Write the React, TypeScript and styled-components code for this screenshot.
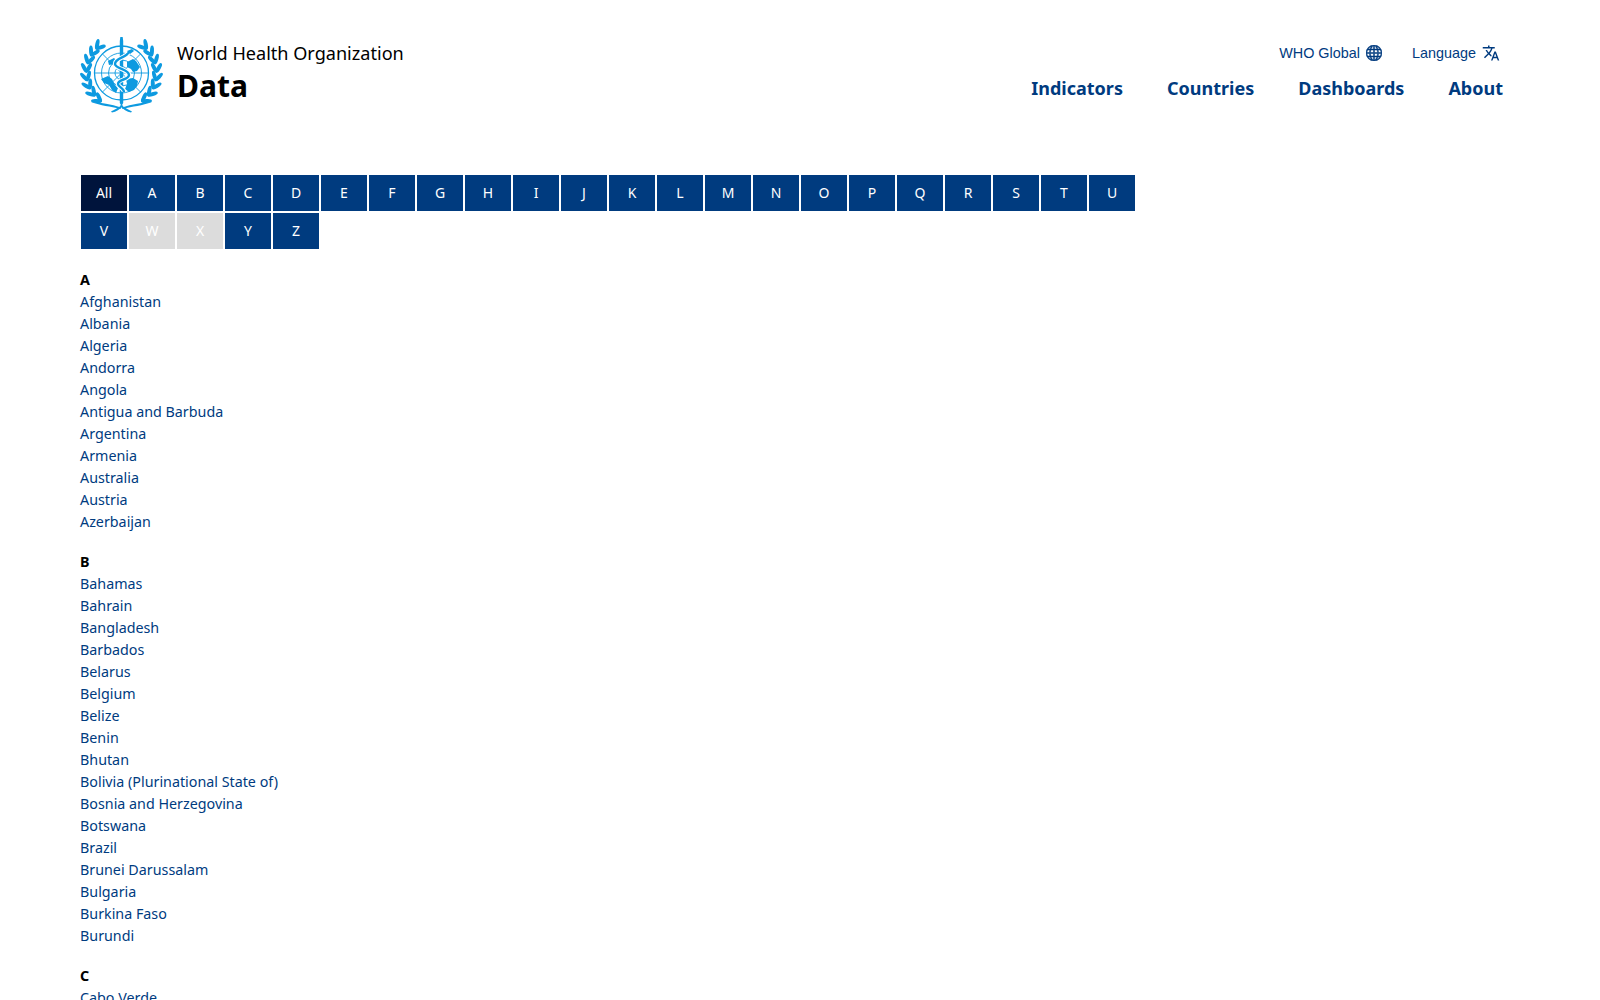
import styled, { createGlobalStyle } from "styled-components";
import { BsGlobe } from "react-icons/bs";
import { MdTranslate } from "react-icons/md";

const LETTERS = ["All", ..."ABCDEFGHIJKLMNOPQRSTUVWXYZ".split("")];
const DISABLED = ["W", "X"];

const SECTIONS: { letter: string; countries: string[] }[] = [
    {
        letter: "A",
        countries: ["Afghanistan", "Albania", "Algeria", "Andorra", "Angola", "Antigua and Barbuda", "Argentina", "Armenia", "Australia", "Austria", "Azerbaijan"],
    },
    {
        letter: "B",
        countries: ["Bahamas", "Bahrain", "Bangladesh", "Barbados", "Belarus", "Belgium", "Belize", "Benin", "Bhutan", "Bolivia (Plurinational State of)", "Bosnia and Herzegovina", "Botswana", "Brazil", "Brunei Darussalam", "Bulgaria", "Burkina Faso", "Burundi"],
    },
    {
        letter: "C",
        countries: ["Cabo Verde"],
    },
];

// wreath leaves, one pair every 14 degrees up the left branch
const WREATH_ANGLES = [36, 50, 64, 78, 92, 106, 120, 134];
const EMBLEM_BLUE = "#0d9ae0";

const Branch = () => (
    <g fill={EMBLEM_BLUE} stroke="none">
        {WREATH_ANGLES.map((deg) => {
            const t = (deg * Math.PI) / 180;
            const x = 41.5 - 35 * Math.sin(t);
            const y = 36 + 35 * Math.cos(t);
            return [-32, 28].map((splay) => {
                const phi = deg - 90 + splay;
                const p = (phi * Math.PI) / 180;
                const lx = x + 4.5 * Math.sin(p);
                const ly = y - 4.5 * Math.cos(p);
                return <ellipse key={splay} cx={lx} cy={ly} rx="2" ry="5.4" transform={`rotate(${phi} ${lx} ${ly})`} />;
            });
        })}
        <path d="M11 65c10 .5 20 2 30 5.500l-.5 1.500C30 69 21 69 11 65z" />
        <path d="M31 74.500c3-1.500 7-3.500 11-6.500l1 1c-3 3-7 6-11 6.500z" />
    </g>
);

const Emblem = () => (
    <svg width="84" height="76" viewBox="0 0 84 76" fill="none" stroke={EMBLEM_BLUE}>
        <circle cx="41.5" cy="36" r="27" strokeWidth="1.3" />
        <circle cx="41.5" cy="36" r="20" strokeWidth=".9" />
        <circle cx="41.5" cy="36" r="13" strokeWidth=".9" />
        <circle cx="41.5" cy="36" r="6.5" strokeWidth=".9" />
        <path d="M14.5 36H68.5M22.5 17l38 38M60.5 17l-38 38" strokeWidth=".9" />
        <g fill={EMBLEM_BLUE} stroke="none">
            <path d="M21 42l7-3 4 3 3 6 3 3-2 5-4-3-3-5-5-2z" />
            <path d="M47 25l6-3 3 2 4 6-3 4-4 1-2-3-4-2z" />
            <path d="M46 42l7-1 5 3-1 5-3 4-5 2-4-3 2-5z" />
            <path d="M28 24l6-3 3 3-3 3-5 1z" />
            <path d="M40.3 0h2.400l.5 4V66l-1.700 3-1.700-3V4z" />
        </g>
        <path d="M49 15c-3 6-14 6-14 12 0 5 14 5 14 11 0 5-11 4-11 9 0 3 6 4 6 8" stroke="#fff" strokeWidth="4.4" />
        <path d="M49 15c-3 6-14 6-14 12 0 5 14 5 14 11 0 5-11 4-11 9 0 3 6 4 6 8" strokeWidth="2.4" />
        <path d="M47 14l5-2 2 2-4 3z" fill={EMBLEM_BLUE} stroke="none" />
        <Branch />
        <g transform="translate(83 0) scale(-1 1)">
            <Branch />
        </g>
    </svg>
);

const App = () => (
    <Page>
        <GlobalStyle />
        <Header>
            <Brand>
                <Emblem />
                <BrandText>
                    <Organization>World Health Organization</Organization>
                    <BrandTitle>Data</BrandTitle>
                </BrandText>
            </Brand>
            <HeaderRight>
                <Utility>
                    <UtilityLink>
                        WHO Global <GlobeIcon size={16} />
                    </UtilityLink>
                    <UtilityLink>
                        Language <MdTranslate size={18} />
                    </UtilityLink>
                </Utility>
                <MainNav>
                    <NavLink>Indicators</NavLink>
                    <NavLink>Countries</NavLink>
                    <NavLink>Dashboards</NavLink>
                    <NavLink>About</NavLink>
                </MainNav>
            </HeaderRight>
        </Header>
        <Filter>
            {LETTERS.map((letter) => (
                <LetterButton key={letter} $active={letter === "All"} $disabled={DISABLED.includes(letter)}>
                    {letter}
                </LetterButton>
            ))}
        </Filter>
        {SECTIONS.map((section) => (
            <Section key={section.letter}>
                <SectionLetter>{section.letter}</SectionLetter>
                {section.countries.map((country) => (
                    <CountryLink key={country}>{country}</CountryLink>
                ))}
            </Section>
        ))}
    </Page>
);

export default App;

const GlobalStyle = createGlobalStyle`
    html, body {
        margin: 0;
        height: 1000px;
        overflow: hidden;
        background: #fff;
    }
    body {
        font-family: "Noto Sans", sans-serif;
    }
`;
const Page = styled.div`
    height: 1000px;
    overflow: hidden;
    padding: 0 97px 0 80px;
`;
const Header = styled.header`
    display: flex;
    justify-content: space-between;
    align-items: flex-start;
    padding-top: 37px;
    height: 175px;
    box-sizing: border-box;
`;
const Brand = styled.div`
    display: flex;
    align-items: flex-start;
    gap: 13px;
`;
const BrandText = styled.div`
    display: flex;
    flex-direction: column;
    padding-top: 3px;
`;
const Organization = styled.div`
    font-size: 18.1px;
    line-height: 26px;
    color: #000;
`;
const BrandTitle = styled.div`
    font-size: 30px;
    font-weight: 700;
    line-height: 40px;
    color: #000;
`;
const HeaderRight = styled.div`
    display: flex;
    flex-direction: column;
    align-items: flex-end;
`;
const Utility = styled.div`
    display: flex;
    align-items: center;
    gap: 30px;
    height: 24px;
    padding: 4px 3px 0 0;
`;
const UtilityLink = styled.a`
    display: flex;
    align-items: center;
    gap: 6px;
    font-family: "Liberation Sans", Arial, sans-serif;
    font-size: 14.4px;
    line-height: 18px;
    color: #003b7f;
    svg {
        flex: none;
    }
`;
const GlobeIcon = styled(BsGlobe)`
    stroke: currentColor;
    stroke-width: 0.5px;
`;
const MainNav = styled.nav`
    display: flex;
    gap: 44px;
    margin-top: 10px;
`;
const NavLink = styled.a`
    font-size: 18px;
    font-weight: 700;
    line-height: 26px;
    color: #003b7f;
`;
const Filter = styled.div`
    display: flex;
    flex-wrap: wrap;
    gap: 2px;
    width: 1080px;
    margin: 0 0 20px 1px;
`;
const LetterButton = styled.button<{ $active?: boolean; $disabled?: boolean }>`
    width: 46px;
    height: 36px;
    padding: 0 0 2px;
    border: 0;
    font-family: "Noto Sans", sans-serif;
    font-size: 14px;
    color: #fff;
    background: ${(p) => (p.$active ? "#00143c" : p.$disabled ? "#dcdcdc" : "#003b7f")};
`;
const Section = styled.section`
    display: flex;
    flex-direction: column;
    align-items: flex-start;
    margin-bottom: 18px;
    font-size: 14.3px;
    line-height: 22px;
`;
const SectionLetter = styled.strong`
    color: #000;
`;
const CountryLink = styled.a`
    color: #003b7f;
`;
